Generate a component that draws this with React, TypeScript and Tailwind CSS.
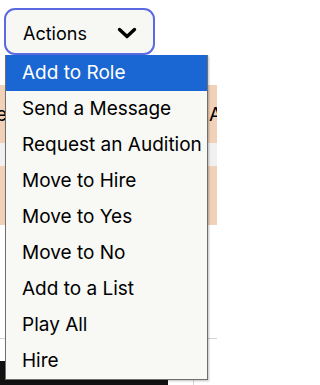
import { useState } from "react";

const actions = [
  "Add to Role",
  "Send a Message",
  "Request an Audition",
  "Move to Hire",
  "Move to Yes",
  "Move to No",
  "Add to a List",
  "Play All",
  "Hire",
];

export default function App() {
  const [active, setActive] = useState(0);

  return (
    <div
      className="relative w-[217px] h-[385px] overflow-hidden bg-white text-black"
      style={{ fontFamily: "Inter, 'Noto Sans', sans-serif" }}
    >
      <div className="pt-2 pl-1">
        <button className="flex items-center w-[151px] h-[47px] pl-[17px] pr-[16px] pt-[3px] justify-between rounded-[11px] border-2 border-[#5b6ae2] bg-[#f7f7f3] text-[18px]">
          <span>Actions</span>
          <svg width="20" height="12" viewBox="0 0 20 12" fill="none">
            <path d="M2.5 2.5l7.5 7 7.5-7" stroke="#000" strokeWidth="3.4" strokeLinecap="round" strokeLinejoin="round" />
          </svg>
        </button>
      </div>

      {/* table behind the menu */}
      <div className="mt-[30px] text-[19px]">
        <div className="flex justify-between items-center h-[58px] bg-[#f1d2b9]">
          <div className="w-[7px] overflow-hidden flex justify-end whitespace-nowrap pt-[2px]">Role</div>
          <div className="w-[8px] overflow-hidden whitespace-nowrap pt-[2px]">Age</div>
        </div>
        <div className="h-[23px] bg-[#f1f1f1]" />
        <div className="h-[59px] bg-[#f1d2b9]" />
        <div className="h-[114px] border-b border-[#d4d4d4]" />
        <div className="h-[22px]" />
        <div className="flex h-[24px]">
          <div className="w-[168px] bg-[#111111]" />
          <div className="w-[25px]" />
          <div className="flex-1 border-l border-[#d8d8d8]" />
        </div>
      </div>

      <ul className="absolute left-[5px] top-[55px] w-[203px] border border-[#6f6f6f] border-t-0 bg-[#f8f8f4] shadow-[1px_1px_2px_rgba(0,0,0,0.25)]">
        {actions.map((a, i) => (
          <li
            key={a}
            onMouseEnter={() => setActive(i)}
            className={`flex items-center h-[36px] pl-4 pt-[1px] text-[19px] whitespace-nowrap ${
              i === active ? "bg-[#1a66d2] text-white" : "text-black"
            }`}
          >
            {a}
          </li>
        ))}
      </ul>
    </div>
  );
}
